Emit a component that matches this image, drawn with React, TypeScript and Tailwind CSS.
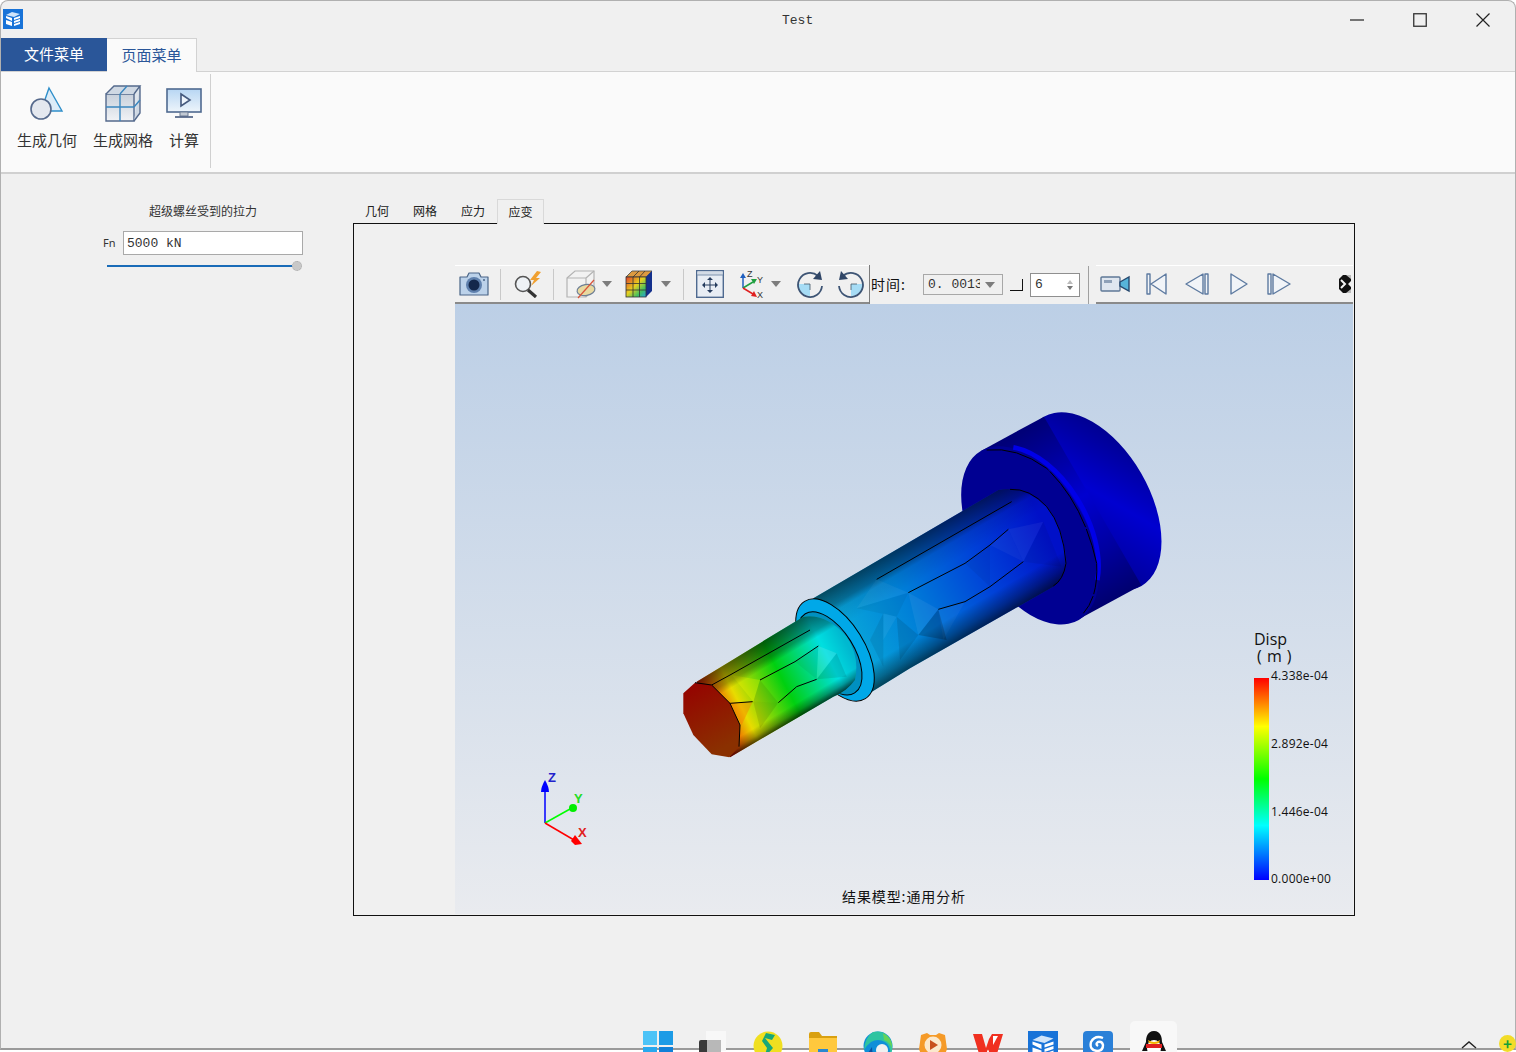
const AppLogo = ({ size = 20 }: { size?: number }) => (
  <svg width={size} height={size} viewBox="0 0 20 20">
    <rect width="20" height="20" fill="#1873d8" />
    <path d="M3 6 L9 3 L17 5 L11 8 Z" fill="#cfe4fa" />
    <path d="M3 7 L9 9 V12 L3 9 Z M3 11 L9 13 V17 L3 15 Z" fill="#fff" />
    <path d="M11 9 L17 7 V9 L11 11 Z M11 12 L17 10 V12 L11 14 Z M11 15 L17 13 V15 L11 17 Z" fill="#fff" />
  </svg>
);

const GeometryIcon = () => (
  <svg width="36" height="36" viewBox="0 0 36 36">
    <path d="M20 2 L33 25 H12 Z" fill="#dcecf8" stroke="#2f8fca" strokeWidth="1.4" />
    <circle cx="12" cy="23" r="10" fill="#e4e8ef" stroke="#55698c" strokeWidth="1.6" />
  </svg>
);

const MeshIcon = () => (
  <svg width="38" height="38" viewBox="0 0 38 38">
    <path d="M2 9 L10 1 H36 L36 28 L30 36 H2 Z" fill="#dfe5ec" />
    <path d="M2 9 H30 V36 H2 Z" fill="url(#meshFace)" stroke="#54698c" strokeWidth="1.4" />
    <path d="M2 9 L10 1 H36 L30 9 M30 36 L36 28 V1" fill="#cfd8e3" stroke="#54698c" strokeWidth="1.4" />
    <path d="M16 9 V36 M2 22 H30 M30 22 L36 15 M16 9 L23 1" fill="none" stroke="#3a87bf" strokeWidth="1.4" />
    <defs>
      <linearGradient id="meshFace" x1="0" y1="0" x2="0" y2="1">
        <stop offset="0" stopColor="#c8d0db" />
        <stop offset="1" stopColor="#f1f3f6" />
      </linearGradient>
    </defs>
  </svg>
);

const ScreenIcon = () => (
  <svg width="36" height="32" viewBox="0 0 36 32" className="shrink-0">
    <rect x="1" y="1" width="34" height="23" fill="url(#screenFill)" stroke="#4f6a90" strokeWidth="1.6" />
    <path d="M15 6 L24 12 L15 18 Z" fill="#eef5fc" stroke="#45597d" strokeWidth="1.6" />
    <path d="M14 24 H22 V28 H14 Z" fill="#c3cad4" stroke="#6b7b92" />
    <path d="M9 29 H27" stroke="#45597d" strokeWidth="1.6" />
    <defs>
      <linearGradient id="screenFill" x1="0" y1="0" x2="0" y2="1">
        <stop offset="0" stopColor="#b7d6f3" />
        <stop offset="1" stopColor="#eef5fb" />
      </linearGradient>
    </defs>
  </svg>
);

const DropArrow = ({ className = "" }: { className?: string }) => (
  <svg width="10" height="6" viewBox="0 0 10 6" className={className}>
    <path d="M0 0 H10 L5 6 Z" fill="#7d7d7d" />
  </svg>
);

const ToolSep = ({ className = "" }: { className?: string }) => (
  <div className={`w-px h-[31px] bg-[#c9c9c9] ${className}`} />
);

const CameraIcon = () => (
  <svg width="30" height="24" viewBox="0 0 30 24" className="ml-[4px]">
    <path d="M1 5 H8 L10 1 H20 L22 5 H29 V23 H1 Z" fill="#bcd2ea" stroke="#4a6587" strokeWidth="1.2" strokeLinejoin="round" />
    <circle cx="15" cy="13" r="8" fill="#5f80ad" />
    <circle cx="15" cy="13" r="5.5" fill="#14284c" />
    <circle cx="25" cy="8" r="1" fill="#4a6587" />
  </svg>
);

const ZoomBoltIcon = () => (
  <svg width="30" height="28" viewBox="0 0 30 28">
    <circle cx="10" cy="14" r="7.5" fill="#eef2f6" stroke="#555" strokeWidth="1.6" />
    <path d="M15 20 L23 27" stroke="#333" strokeWidth="3.2" />
    <path d="M24 1 L17 10 H21 L18 16 L27 8 H23 L28 2 Z" fill="#f0a030" />
  </svg>
);

const ClipBoxIcon = () => (
  <svg width="30" height="30" viewBox="0 0 30 30">
    <path d="M1 9 L9 2 H28 V20 L20 28 H1 Z" fill="#f2f2f2" stroke="#b3b3b3" strokeWidth="1.2" />
    <path d="M1 9 H20 V28 M20 9 L28 2" fill="none" stroke="#b3b3b3" strokeWidth="1.2" />
    <ellipse cx="20" cy="21" rx="9" ry="5.5" transform="rotate(-10 20 21)" fill="#e8d9a0" stroke="#6e7f96" strokeWidth="1.2" />
    <path d="M12 29 L28 11" stroke="#d9533a" strokeWidth="1.2" />
  </svg>
);

const ColorCubeIcon = () => (
  <svg width="28" height="28" viewBox="0 0 28 28">
    <defs>
      <linearGradient id="cubeFace" x1="0" y1="0" x2="1" y2="1">
        <stop offset="0" stopColor="#e0402a" />
        <stop offset="0.45" stopColor="#e8d020" />
        <stop offset="0.75" stopColor="#40c060" />
        <stop offset="1" stopColor="#28a0e0" />
      </linearGradient>
    </defs>
    <path d="M1 7 L7 1 H27 L21 7 Z" fill="#dd9a40" stroke="#444" strokeWidth="0.8" />
    <path d="M21 7 L27 1 V21 L21 27 Z" fill="#14308c" />
    <rect x="1" y="7" width="20" height="20" fill="url(#cubeFace)" stroke="#333" strokeWidth="0.8" />
    <path d="M8 7 V27 M14.500 7 V27 M1 13.500 H21 M1 20 H21 M8 7 L14 1 M14.500 7 L20 1" stroke="#333" strokeWidth="0.8" fill="none" />
  </svg>
);

const FitIcon = () => (
  <svg width="28" height="28" viewBox="0 0 28 28">
    <rect x="0.700" y="0.700" width="26.600" height="26.600" fill="#e8edf4" stroke="#4f6a90" strokeWidth="1.4" />
    <rect x="1.400" y="1.400" width="25.200" height="3.500" fill="#d3dbe6" />
    <path d="M1 5 H27" stroke="#7d92ad" />
    <path d="M14 9 V21 M8 15 H20" stroke="#263c5e" strokeWidth="1" />
    <path d="M14 7 L17 10 H11 Z M14 23 L17 20 H11 Z M6 15 L9 12 V18 Z M22 15 L19 12 V18 Z" fill="#263c5e" />
  </svg>
);

const AxesIcon = () => (
  <svg width="26" height="30" viewBox="0 0 26 30">
    <path d="M4 19 V7" stroke="#2060c0" strokeWidth="1.500" />
    <path d="M1 9 L4 4 L7 9 Z" fill="#2060c0" />
    <path d="M4 19 L14 13" stroke="#20a040" strokeWidth="1.500" />
    <path d="M12 10 L18 10 L15 15 Z" fill="#20a040" />
    <path d="M4 19 L14 25" stroke="#e02020" strokeWidth="1.500" />
    <path d="M12 27 L18 28 L15 22 Z" fill="#e02020" />
    <text x="8" y="8" fontSize="9" fill="#333" fontFamily="Liberation Sans">Z</text>
    <text x="18" y="14" fontSize="9" fill="#333" fontFamily="Liberation Sans">Y</text>
    <text x="18" y="29" fontSize="9" fill="#333" fontFamily="Liberation Sans">X</text>
  </svg>
);

const RotateIcon = ({ flip = false }: { flip?: boolean }) => (
  <svg width="28" height="28" viewBox="0 0 28 28" className={flip ? "-scale-x-100" : ""}>
    <path d="M14 14 H2 A12 12 0 0 0 14 26 Z" fill="#a6dcf5" />
    <path d="M14 14 H8 M14 14 V20" stroke="#456" strokeWidth="0.8" />
    <path d="M22 6 A12 12 0 1 0 26 16" fill="none" stroke="#3d5474" strokeWidth="1.800" />
    <path d="M24 1 L26 10 L17 9 Z" fill="#2f4566" />
  </svg>
);

const Triangle = ({ d, w = 28 }: { d: string; w?: number }) => (
  <svg width={w} height="26" viewBox={`0 0 ${w} 26`}>
    <path d={d} fill="#f1f4f8" stroke="#5d7aa0" strokeWidth="1.400" strokeLinejoin="round" />
  </svg>
);

const VideoIcon = () => (
  <svg width="30" height="18" viewBox="0 0 30 18">
    <rect x="1" y="2" width="19" height="14" rx="1" fill="#dfe6ef" stroke="#5f7896" strokeWidth="1.400" />
    <rect x="4" y="5" width="8" height="3" fill="#8fa1b8" />
    <path d="M20 7 L29 2 V16 L20 11 Z" fill="#57b4da" stroke="#27496f" strokeWidth="1.400" />
  </svg>
);

const GripIcon = () => (
  <svg width="12" height="18" viewBox="0 0 12 18">
    <rect width="12" height="18" fill="#111" />
    <path d="M0 0 L4 0 L0 4 Z M0 18 L4 18 L0 14 Z M12 6 V12 L9 9 Z" fill="#f0f0f0" />
    <path d="M2 5 L6 9 L2 13" fill="none" stroke="#f4f4f4" strokeWidth="2" />
    <path d="M7 0 H12 V4 Z M7 18 H12 V14 Z" fill="#bbb" />
  </svg>
);

const Facet = ({ p, c, o }: { p: string; c: string; o: number }) => (
  <polygon points={p} fill={c} opacity={o} />
);

const shankFacets: [string, string, number][] = [
  ["620,538 715,578 560,625", "#fff", 0.05],
  ["560,625 715,578 680,650", "#000", 0.05],
  ["715,578 805,628 745,705", "#fff", 0.06],
  ["640,640 680,650 640,720", "#fff", 0.06],
  ["680,650 745,705 690,780", "#000", 0.1],
  ["745,705 805,628 830,720", "#000", 0.2],
  ["805,628 885,605 820,720", "#fff", 0.04],
  ["960,435 1015,388 1060,485", "#fff", 0.04],
  ["1015,388 1120,365 1060,485", "#fff", 0.05],
  ["1060,485 1120,365 1175,500", "#000", 0.06],
  ["885,490 960,435 960,560", "#000", 0.05],
  ["600,720 640,640 640,800", "#000", 0.08],
];

const thinFacets: [string, string, number][] = [
  ["185,825 270,840 250,905", "#ff0", 0.25],
  ["270,840 325,908 250,905", "#000", 0.08],
  ["250,905 325,908 270,985", "#000", 0.1],
  ["180,910 248,905 215,975", "#f60", 0.35],
  ["445,738 500,760 440,838", "#fff", 0.12],
  ["440,838 500,760 530,830", "#000", 0.1],
  ["375,785 445,738 440,838", "#000", 0.05],
];

const SHANK = "M430 595 L985 270 Q1060 255 1130 320 Q1180 380 1190 490 Q1180 540 1150 560 L720 805 L590 885 Z";
const THIN = "M80 845 L400 650 Q470 640 530 710 Q570 770 555 840 Q530 875 490 890 L180 1072 Z";

// 3D model, coordinates are in 3x space like the crop of the reference
const BoltModel = () => (
  <svg width="510" height="370" viewBox="0 0 1530 1110" className="absolute left-[215px] top-[96px]">
    <defs>
      <linearGradient id="shankBase" gradientUnits="userSpaceOnUse" x1="500" y1="760" x2="1150" y2="430">
        <stop offset="0" stopColor="#0bb0da" />
        <stop offset="0.35" stopColor="#0080d8" />
        <stop offset="0.7" stopColor="#0040d8" />
        <stop offset="1" stopColor="#0010c8" />
      </linearGradient>
      <linearGradient id="shankShade" gradientUnits="userSpaceOnUse" x1="700" y1="437" x2="867" y2="722">
        <stop offset="0" stopColor="#000" stopOpacity="0.55" />
        <stop offset="0.14" stopColor="#000" stopOpacity="0.32" />
        <stop offset="0.2" stopColor="#000" stopOpacity="0.08" />
        <stop offset="0.35" stopColor="#000" stopOpacity="0" />
        <stop offset="0.78" stopColor="#000" stopOpacity="0" />
        <stop offset="0.92" stopColor="#000" stopOpacity="0.35" />
        <stop offset="1" stopColor="#000" stopOpacity="0.6" />
      </linearGradient>
      <linearGradient id="thinBase" gradientUnits="userSpaceOnUse" x1="130" y1="960" x2="540" y2="750">
        <stop offset="0" stopColor="#f01000" />
        <stop offset="0.2" stopColor="#e8dc00" />
        <stop offset="0.52" stopColor="#00d010" />
        <stop offset="0.85" stopColor="#00dfe0" />
        <stop offset="1" stopColor="#00b8d0" />
      </linearGradient>
      <linearGradient id="thinShade" gradientUnits="userSpaceOnUse" x1="240" y1="750" x2="366" y2="963">
        <stop offset="0" stopColor="#000" stopOpacity="0.55" />
        <stop offset="0.2" stopColor="#000" stopOpacity="0.28" />
        <stop offset="0.28" stopColor="#000" stopOpacity="0" />
        <stop offset="0.84" stopColor="#000" stopOpacity="0" />
        <stop offset="0.93" stopColor="#000" stopOpacity="0.3" />
        <stop offset="1" stopColor="#000" stopOpacity="0.7" />
      </linearGradient>
      <linearGradient id="headSide" gradientUnits="userSpaceOnUse" x1="1123" y1="59" x2="1407" y2="553">
        <stop offset="0" stopColor="#000078" />
        <stop offset="0.25" stopColor="#0000a8" />
        <stop offset="0.45" stopColor="#0000d0" />
        <stop offset="0.75" stopColor="#0000a0" />
        <stop offset="1" stopColor="#000070" />
      </linearGradient>
      <linearGradient id="endFace" x1="0" y1="0" x2="0.4" y2="1">
        <stop offset="0" stopColor="#960000" />
        <stop offset="1" stopColor="#8a3000" />
      </linearGradient>
    </defs>

    <ellipse cx="1268" cy="304" rx="293" ry="168" transform="rotate(60 1268 304)" fill="url(#headSide)" />
    <polygon points="934,152 1122,50 1414,556 1226,658" fill="url(#headSide)" />
    <ellipse cx="1080" cy="406" rx="293" ry="168" transform="rotate(60 1080 406)" fill="#000092" />
    <path d="M1030 142 A272 158 60 0 1 1282 540" fill="none" stroke="#0000e8" strokeWidth="14" />
    <path d="M950 150 Q1040 140 1130 205 Q1240 310 1280 490 Q1285 590 1240 640" fill="none" stroke="#000" strokeWidth="3" strokeDasharray="200 6" />

    <path d={SHANK} fill="url(#shankBase)" />
    {shankFacets.map(([p, c, o]) => (
      <Facet key={p} p={p} c={c} o={o} />
    ))}
    <path d={SHANK} fill="url(#shankShade)" />
    <path d="M1020 268 Q1080 265 1130 320 Q1180 380 1188 490 Q1180 540 1150 558" fill="none" stroke="#000" strokeWidth="3" />
    <path d="M620 538 L1025 305 M715 578 L885 490 L960 435 L1015 388 M805 628 L885 605 L960 560 L1060 485" fill="none" stroke="#000" strokeWidth="3" />

    <ellipse cx="495" cy="750" rx="172" ry="88" transform="rotate(58 495 750)" fill="#00a8e8" stroke="#000" strokeWidth="3" />
    <ellipse cx="480" cy="760" rx="140" ry="72" transform="rotate(58 480 760)" fill="#0090c0" stroke="#000" strokeWidth="3" />

    <path d={THIN} fill="url(#thinBase)" />
    {thinFacets.map(([p, c, o]) => (
      <Facet key={p} p={p} c={c} o={o} />
    ))}
    <path d={THIN} fill="url(#thinShade)" />
    <path d="M180 825 L420 690 M270 840 L375 785 L445 738 M325 908 L380 860 L440 838 M180 910 L248 905 M125 855 L180 825" fill="none" stroke="#000" strokeWidth="3" />
    <polygon points="40,880 75,848 125,855 180,910 210,975 207,1040 178,1072 125,1063 70,1005 40,940" fill="url(#endFace)" />
    <path d="M75 848 L125 855 L180 910 L210 975 L207 1040" fill="none" stroke="#000" strokeWidth="3" />
  </svg>
);

const Triad = () => (
  <svg width="52" height="80" viewBox="0 0 52 80" className="absolute left-[83px] top-[465px]">
    <path d="M7 54 V18" stroke="#0000ff" strokeWidth="1.500" />
    <path d="M3 23 Q3 18 7 11 Q11 18 11 23 Z" fill="#0000ff" />
    <path d="M7 54 L32 40" stroke="#00ff00" strokeWidth="1.500" />
    <circle cx="35" cy="39" r="4" fill="#00ee00" />
    <path d="M7 54 L36 71" stroke="#ff0000" strokeWidth="1.500" />
    <path d="M33 72 L37 66 L44 75 L37 76 Z" fill="#ff0000" />
    <text x="10" y="13" fontSize="13" fontWeight="700" fill="#2222cc" fontFamily="Liberation Sans">Z</text>
    <text x="36" y="34" fontSize="13" fontWeight="700" fill="#22dd22" fontFamily="Liberation Sans">Y</text>
    <text x="40" y="68" fontSize="13" fontWeight="700" fill="#e02020" fontFamily="Liberation Sans">X</text>
  </svg>
);

const Legend = () => (
  <div className="absolute left-[799px] top-[327px] w-[90px] font-['Open_Sans','Noto_Sans_CJK_SC',sans-serif] text-[#111]">
    <div className="text-[16px] leading-[17px]">Disp</div>
    <div className="text-[16px] leading-[17px] pl-[3px] whitespace-pre tracking-[0.5px]">( m )</div>
    <div className="flex mt-[13px] h-[202px]">
      <div className="w-[15px] h-full bg-[linear-gradient(to_bottom,#ff0000,#ffff00_24%,#00ff00_50%,#00ffff_73%,#0000ff)]" />
      <div className="relative flex-1 text-[12px] leading-[14px] pl-[2px] tracking-[0.25px]">
        <div className="absolute top-[-9px]">4.338e-04</div>
        <div className="absolute top-[59px]">2.892e-04</div>
        <div className="absolute top-[127px]">1.446e-04</div>
        <div className="absolute top-[194px]">0.000e+00</div>
      </div>
    </div>
  </div>
);

const Viewer = () => (
  <div className="ml-[101px] mt-[41px] w-[898px] flex flex-col">
    <div className="h-[39px] flex items-stretch">
      <div className="w-[414px] border-t border-t-white border-b-2 border-b-[#8a8a8a] flex items-center">
        <CameraIcon />
        <ToolSep className="ml-[11px]" />
        <div className="ml-[12px]"><ZoomBoltIcon /></div>
        <ToolSep className="ml-[10px]" />
        <div className="ml-[12px]"><ClipBoxIcon /></div>
        <DropArrow className="ml-[6px]" />
        <div className="ml-[13px]"><ColorCubeIcon /></div>
        <DropArrow className="ml-[8px]" />
        <ToolSep className="ml-[12px]" />
        <div className="ml-[12px]"><FitIcon /></div>
        <div className="ml-[15px]"><AxesIcon /></div>
        <DropArrow className="ml-[6px]" />
        <div className="ml-[15px]"><RotateIcon /></div>
        <div className="ml-[13px]"><RotateIcon flip /></div>
      </div>
      <div className="w-[228px] border-l border-l-[#7c7c7c] flex items-center">
        <span className="text-[14px] text-[#111] ml-px w-[38px] tracking-[1px]">时间:</span>
        <div className="ml-[14px] w-[80px] h-[21px] border border-[#a8a8a8] flex items-center pl-[4px] font-['Liberation_Mono',monospace] text-[13px] text-[#333]">
          <span className="w-[52px] overflow-hidden whitespace-pre">0. 0013</span>
          <DropArrow className="ml-[5px]" />
        </div>
        <div className="ml-[7px] mt-[1px] w-[13px] h-[12px] border-r border-b border-[#111]" />
        <div className="ml-[7px] w-[50px] h-[24px] bg-white border border-[#8f8f8f] flex items-center justify-between pl-[4px] pr-[6px] font-['Liberation_Mono',monospace] text-[13px] text-[#333]">
          <span>6</span>
          <div className="flex flex-col gap-[2px]">
            <div className="w-0 h-0 border-x-[3px] border-x-transparent border-b-[4px] border-b-[#bbb]" />
            <div className="w-0 h-0 border-x-[3px] border-x-transparent border-t-[4px] border-t-[#777]" />
          </div>
        </div>
        <div className="ml-[8px] w-px h-[38px] bg-[#a0a0a0]" />
      </div>
      <div className="flex-1 border-t border-t-white border-b-2 border-b-[#8a8a8a] flex items-center ml-[-1px]">
        <div className="ml-[4px]"><VideoIcon /></div>
        <div className="ml-[15px]"><Triangle w={24} d="M2 3 H5 V23 H2 Z M21 3 V23 L6 13 Z" /></div>
        <div className="ml-[15px]"><Triangle w={26} d="M19 3 V23 L2 13 Z M21 3 H24 V23 H21 Z" /></div>
        <div className="ml-[19px]"><Triangle w={20} d="M2 3 L18 13 L2 23 Z" /></div>
        <div className="ml-[17px]"><Triangle w={26} d="M2 3 H5 V23 H2 Z M7 3 L24 13 L7 23 Z" /></div>
        <div className="ml-auto mr-[2px]"><GripIcon /></div>
      </div>
    </div>
    <div className="relative h-[610px] bg-[linear-gradient(to_bottom,#bccfe6,#e9ebef)] overflow-hidden">
      <BoltModel />
      <Triad />
      <Legend />
      <div className="absolute bottom-[8px] left-[387px] text-[14px] leading-[20px] tracking-[0.9px] text-[#111]">结果模型:通用分析</div>
    </div>
  </div>
);

const RibbonButton = ({ icon, label, className = "" }: { icon: React.ReactNode; label: string; className?: string }) => (
  <div className={`flex flex-col items-center ${className}`}>
    <div className="h-[38px] flex items-center justify-center">{icon}</div>
    <div className="mt-[7px] text-[15px] leading-[20px] text-[#333] whitespace-nowrap">{label}</div>
  </div>
);

const TaskIcon = ({ children }: { children: React.ReactNode }) => (
  <div className="w-[30px] h-[21px] overflow-hidden shrink-0">{children}</div>
);

const Taskbar = () => (
  <div className="absolute left-[643px] bottom-0 h-[31px] flex items-end gap-[25px]">
    <TaskIcon>
      <svg width="30" height="30" viewBox="0 0 30 30">
        <rect x="0" y="0" width="14" height="14" fill="#4cc3f7" />
        <rect x="16" y="0" width="14" height="14" fill="#1c9be6" />
        <rect x="0" y="16" width="14" height="14" fill="#28a8ee" />
        <rect x="16" y="16" width="14" height="14" fill="#1080d8" />
      </svg>
    </TaskIcon>
    <TaskIcon>
      <svg width="30" height="30" viewBox="0 0 30 30">
        <rect x="8" y="0" width="20" height="20" fill="#f8f8f8" />
        <rect x="1" y="9" width="22" height="20" rx="2" fill="#3a3a3a" />
        <rect x="9" y="9" width="14" height="14" fill="#b8b8b8" />
      </svg>
    </TaskIcon>
    <TaskIcon>
      <svg width="30" height="30" viewBox="0 0 30 30">
        <circle cx="15" cy="15" r="14.500" fill="#f0df20" />
        <path d="M13 2 L22 4 L19 9 L12 7 L20 17 L11 27 L14 17 L9 10 Z" fill="#18a878" />
      </svg>
    </TaskIcon>
    <TaskIcon>
      <svg width="30" height="30" viewBox="0 0 30 30">
        <path d="M1 3 Q1 1 3 1 H11 L14 5 H29 V29 H1 Z" fill="#d9a010" />
        <rect x="1" y="7" width="28" height="22" fill="#ffc83d" />
        <rect x="10" y="18" width="10" height="8" fill="#2a88d0" />
      </svg>
    </TaskIcon>
    <TaskIcon>
      <svg width="30" height="30" viewBox="0 0 30 30">
        <circle cx="15" cy="15" r="14.500" fill="#0f8fd8" />
        <path d="M10 1 Q24 -2 29 12 Q30 20 27 24 Q28 15 22 11 Q15 7 8 11 Q4 14 1 19 Q2 6 10 1 Z" fill="#2ec4a0" />
        <path d="M20 2 Q30 7 29 18 Q27 11 21 9 Z" fill="#63d35a" />
        <circle cx="19" cy="19" r="6" fill="#f0f0f0" />
        <path d="M9 16 Q9 26 16 29 Q8 29 5 22 Z" fill="#0a4fa0" />
      </svg>
    </TaskIcon>
    <TaskIcon>
      <svg width="30" height="30" viewBox="0 0 30 30">
        <path d="M3 4 L9 2 L12 4 H18 L21 2 L27 4 L29 18 Q26 29 15 29 Q4 29 1 18 Z" fill="#f59a28" />
        <circle cx="15" cy="14" r="8.500" fill="#fbe8cc" />
        <path d="M12 9 L20 14 L12 19 Z" fill="#c8501c" />
      </svg>
    </TaskIcon>
    <TaskIcon>
      <svg width="30" height="30" viewBox="0 0 30 30">
        <path d="M0 3 H9 L13 17 L16 8 L19 3 H30 L23 26 H18 L15 18 L12 26 H7 Z" fill="#f03020" />
        <path d="M20 5 H25 L20 14 Z" fill="#fff" />
      </svg>
    </TaskIcon>
    <TaskIcon>
      <AppLogo size={30} />
    </TaskIcon>
    <TaskIcon>
      <svg width="30" height="30" viewBox="0 0 30 30">
        <rect width="30" height="30" rx="4" fill="#2a80d8" />
        <path d="M20 7 Q12 4 8 11 Q6 19 14 20 Q20 20 20 14 Q19 10 15 11 Q12 13 15 15" fill="none" stroke="#fff" strokeWidth="2.400" />
      </svg>
    </TaskIcon>
    <div className="ml-[-8px] w-[47px] h-[31px] bg-[#f8f8f8] rounded-t-[5px] flex justify-center items-start pt-[10px] overflow-hidden">
      <svg width="26" height="30" viewBox="0 0 26 30">
        <path d="M13 0 C20 0 21 7 21 11 L25 20 H1 L5 11 C5 7 6 0 13 0 Z" fill="#111" />
        <ellipse cx="13" cy="17" rx="7" ry="8" fill="#fff" />
        <path d="M7 9 Q13 13 19 9 L18 12 Q13 14 8 12 Z" fill="#f5b400" />
        <path d="M5 13 H21 V17 H5 Z" fill="#e02020" />
      </svg>
    </div>
  </div>
);

export default function App() {
  return (
    <div className="relative w-[1516px] h-[1052px] overflow-hidden bg-white font-['Noto_Sans_CJK_SC',sans-serif]">
      <div className="w-full h-[1050px] bg-[#f0f0f0] rounded-t-[8px] border-t border-x border-[#b0b0b0] border-b-2 border-b-[#9a9a9a] flex flex-col">
        {/* title bar */}
        <div className="relative h-[37px] flex items-center shrink-0">
          <div className="ml-[2px] mt-[-1px]"><AppLogo /></div>
          <div className="absolute left-[781px] top-[11px] font-['Liberation_Mono',monospace] text-[13px] leading-[18px] text-[#333]">Test</div>
          <div className="ml-auto mr-[25px] flex items-center gap-[49px]">
            <svg width="14" height="2" viewBox="0 0 14 2"><path d="M0 1 H14" stroke="#222" strokeWidth="1.200" /></svg>
            <svg width="14" height="14" viewBox="0 0 14 14"><rect x="0.750" y="0.750" width="12.500" height="12.500" fill="none" stroke="#333" strokeWidth="1.300" /></svg>
            <svg width="14" height="14" viewBox="0 0 14 14"><path d="M0.500 0.500 L13.500 13.500 M13.500 0.500 L0.500 13.500" stroke="#222" strokeWidth="1.200" /></svg>
          </div>
        </div>
        {/* tabs */}
        <div className="h-[34px] flex shrink-0 border-b border-[#d2d2d2]">
          <div className="w-[106px] h-[33px] bg-[#2a5699] text-white text-[15px] flex items-center justify-center">文件菜单</div>
          <div className="w-[90px] h-[34px] bg-[#fafafa] border-t border-r border-[#d2d2d2] text-[#2a5699] text-[15px] flex items-center justify-center">页面菜单</div>
        </div>
        {/* ribbon */}
        <div className="h-[102px] bg-[#fafafa] border-b-2 border-[#d0d0d0] flex shrink-0 pt-[13px] pl-[16px] relative">
          <div className="flex gap-[16px]">
            <RibbonButton icon={<GeometryIcon />} label="生成几何" />
            <RibbonButton icon={<MeshIcon />} label="生成网格" />
            <RibbonButton icon={<ScreenIcon />} label="计算" className="w-[30px]" />
          </div>
          <div className="ml-[11px] mt-[-11px] w-px h-[94px] bg-[#d0d0d0]" />
        </div>
        {/* content */}
        <div className="flex-1 flex">
          <div className="w-[352px] shrink-0 pt-[28px] flex flex-col">
            <div className="text-center ml-[107px] w-[190px] text-[12px] leading-[18px] text-[#333] whitespace-nowrap">超级螺丝受到的拉力</div>
            <div className="mt-[11px] flex items-center">
              <span className="ml-[102px] w-[20px] text-[11px] text-[#333] font-['Noto_Sans',sans-serif]">Fn</span>
              <div className="w-[180px] h-[24px] bg-white border border-[#a9a9a9] pl-[3px] font-['Liberation_Mono',monospace] text-[13px] leading-[23px] text-[#333]">5000 kN</div>
            </div>
            <div className="mt-[6px] ml-[106px] w-[195px] flex items-center">
              <div className="flex-1 h-[2px] bg-[#1a6cb8]" />
              <div className="w-[10px] h-[10px] rounded-full bg-[#c8c8c8] border border-dotted border-[#aaa]" />
            </div>
          </div>
          <div className="flex flex-col mt-[24px]">
            <div className="h-[25px] flex items-end text-[12px] text-[#222] pl-[12px] relative">
              <div className="w-[48px] h-[24px] flex items-center">几何</div>
              <div className="w-[48px] h-[24px] flex items-center">网格</div>
              <div className="w-[36px] h-[24px] flex items-center">应力</div>
              <div className="w-[47px] h-[25px] mb-[-1px] bg-[#f0f0f0] border border-b-0 border-[#d9d9d9] flex items-center justify-center z-10">应变</div>
            </div>
            <div className="w-[1002px] h-[693px] border border-[#111] flex">
              <Viewer />
            </div>
          </div>
        </div>
      </div>
      <Taskbar />
      <svg width="16" height="10" viewBox="0 0 16 10" className="absolute left-[1461px] top-[1040px]">
        <path d="M1 8 L8 2 L15 8" fill="none" stroke="#222" strokeWidth="1.400" />
      </svg>
      <div className="absolute left-[1499px] top-[1035px] w-[17px] h-[17px] rounded-full bg-[#f2dc28] text-[#12a038] text-[15px] leading-[17px] font-bold text-center">+</div>
    </div>
  );
}
